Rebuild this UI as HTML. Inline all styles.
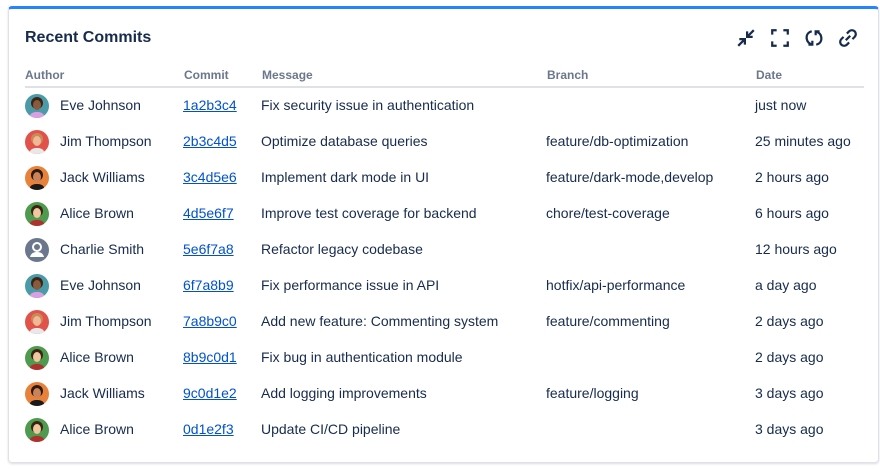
<!DOCTYPE html>
<html><head><meta charset="utf-8"><style>
body{margin:0;width:880px;height:469px;background:#fff;font-family:"Liberation Sans",sans-serif;overflow:hidden}
.card{position:absolute;left:8px;top:6px;width:871px;height:457px;border:1px solid #dfe1e6;border-top:3px solid #2684ff;border-radius:4px;box-sizing:border-box;box-shadow:0 1px 2px rgba(9,30,66,.15)}
.title{position:absolute;left:16px;top:20px;font-size:16px;font-weight:bold;color:#172b4d}
.icons{position:absolute;right:20px;top:19px;display:flex;gap:14px}
.icons svg{width:20px;height:20px}
.th{position:absolute;top:59px;font-size:12px;font-weight:bold;color:#6b778c}
.hl{position:absolute;left:16px;width:839px;top:77px;height:2px;background:#dfe1e6}
.row{position:absolute;left:0;width:860px;height:36px;font-size:14px;color:#172b4d}
.row span{position:absolute;top:10px;white-space:nowrap}
.row a{color:#0052cc;text-decoration:underline}
.av{position:absolute;left:25px;top:7px;width:24px;height:24px}
</style></head><body>
<div class="card">
<div class="title">Recent Commits</div>
<div class="icons">
<svg viewBox="0 0 18 18" fill="none" stroke="#172b4d" stroke-width="2"><path d="M2 16l6-6M3 10h5v5M16 2l-6 6M15 8h-5V3"/></svg>
<svg viewBox="0 0 18 18" fill="none" stroke="#172b4d" stroke-width="2"><path d="M2 6V2h4M12 2h4v4M16 12v4h-4M6 16H2v-4"/></svg>
<svg viewBox="0 0 18 18" fill="none" stroke="#172b4d" stroke-width="2"><path d="M7 3C3 4 2 7 2.5 10s2.5 4 4.5 5M4 15h3.5v-3.5M11 15c4-1 5-4 4.5-7S13 4 11 3M14 3h-3.5v3.5"/></svg>
<svg viewBox="0 0 18 18" fill="none" stroke="#172b4d" stroke-width="2"><path d="M7 11l4-4M8 5l2-2a3 3 0 0 1 5 5l-2 2M10 13l-2 2a3 3 0 0 1-5-5l2-2"/></svg>
</div>
<div class="th" style="left:16px">Author</div>
<div class="th" style="left:175px">Commit</div>
<div class="th" style="left:253px">Message</div>
<div class="th" style="left:538px">Branch</div>
<div class="th" style="left:747px">Date</div>
<div class="hl"></div>
</div>
<div id="rows"></div>
<script>
var d=[["e","Eve Johnson","1a2b3c4","Fix security issue in authentication","","just now"],
["j","Jim Thompson","2b3c4d5","Optimize database queries","feature/db-optimization","25 minutes ago"],
["k","Jack Williams","3c4d5e6","Implement dark mode in UI","feature/dark-mode,develop","2 hours ago"],
["a","Alice Brown","4d5e6f7","Improve test coverage for backend","chore/test-coverage","6 hours ago"],
["c","Charlie Smith","5e6f7a8","Refactor legacy codebase","","12 hours ago"],
["e","Eve Johnson","6f7a8b9","Fix performance issue in API","hotfix/api-performance","a day ago"],
["j","Jim Thompson","7a8b9c0","Add new feature: Commenting system","feature/commenting","2 days ago"],
["a","Alice Brown","8b9c0d1","Fix bug in authentication module","","2 days ago"],
["k","Jack Williams","9c0d1e2","Add logging improvements","feature/logging","3 days ago"],
["a","Alice Brown","0d1e2f3","Update CI/CD pipeline","","3 days ago"]];
var bg={e:"#4a9aa8",j:"#e0524a",k:"#e8823a",a:"#4e9a4e"},hair={e:"#3b2414",j:"#c98a5a",k:"#2b1a10",a:"#3b2414"},skin={e:"#8a5a3c",j:"#f0b894",k:"#c9825a",a:"#f0c8a0"},shirt={e:"#d8a0e0",j:"#e8e8e8",k:"#1a1a1a",a:"#b03030"};
var h="";
d.forEach(function(r,i){
var t=87+i*36,av;
if(r[0]=="c")av='<svg class="av" viewBox="0 0 24 24"><circle cx="12" cy="12" r="12" fill="#6b778c"/><circle cx="12" cy="9" r="4" fill="none" stroke="#fff" stroke-width="2"/><path d="M5 19c1-4 4-5 7-5s6 1 7 5" fill="#fff"/></svg>';
else av='<svg class="av" viewBox="0 0 24 24"><clipPath id="c'+i+'"><circle cx="12" cy="12" r="12"/></clipPath><g clip-path="url(#c'+i+')"><rect width="24" height="24" fill="'+bg[r[0]]+'"/><circle cx="12" cy="9" r="6" fill="'+hair[r[0]]+'"/><ellipse cx="12" cy="11" rx="4" ry="5" fill="'+skin[r[0]]+'"/><path d="M4 24c1-5 4-6 8-6s7 1 8 6z" fill="'+shirt[r[0]]+'"/></g></svg>';
h+='<div class="row" style="top:'+t+'px">'+av+'<span style="left:60px">'+r[1]+'</span><span style="left:183px"><a>'+r[2]+'</a></span><span style="left:261px">'+r[3]+'</span><span style="left:546px">'+r[4]+'</span><span style="left:755px">'+r[5]+'</span></div>';
});
document.getElementById("rows").innerHTML=h;
</script>
</body></html>
